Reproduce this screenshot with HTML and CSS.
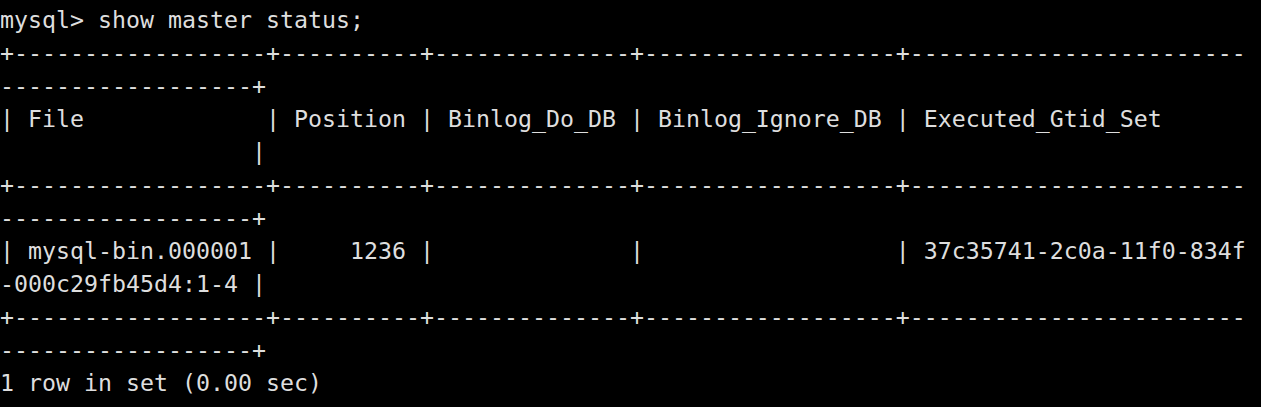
FILE: index.html
```html
<!DOCTYPE html>
<html lang="en">
<head>
<meta charset="utf-8">
<title>mysql</title>
<link rel="stylesheet" href="styles.css">
</head>
<body>
<div class="term">
<div class="line">mysql&gt; show master status;</div>
<div class="line">+------------------+----------+--------------+------------------+------------------------</div>
<div class="line">------------------+</div>
<div class="line">| File             | Position | Binlog_Do_DB | Binlog_Ignore_DB | Executed_Gtid_Set</div>
<div class="line">                  |</div>
<div class="line">+------------------+----------+--------------+------------------+------------------------</div>
<div class="line">------------------+</div>
<div class="line">| mysql-bin.000001 |     1236 |              |                  | 37c35741-2c0a-11f0-834f</div>
<div class="line">-000c29fb45d4:1-4 |</div>
<div class="line">+------------------+----------+--------------+------------------+------------------------</div>
<div class="line">------------------+</div>
<div class="line">1 row in set (0.00 sec)</div>
</div>
</body>
</html>
```

FILE: styles.css
```css
html, body {
  margin: 0;
  padding: 0;
  background: #000000;
}
.term {
  display: flex;
  flex-direction: column;
  padding: 3px 0 0 0;
  color: #dedede;
  font-family: "DejaVu Sans Mono", "Liberation Mono", monospace;
  font-size: 23.26px;
  width: 1261px;
  height: 407px;
  box-sizing: border-box;
  overflow: hidden;
}
.line {
  white-space: pre;
  height: 33px;
  line-height: 33px;
}
```
